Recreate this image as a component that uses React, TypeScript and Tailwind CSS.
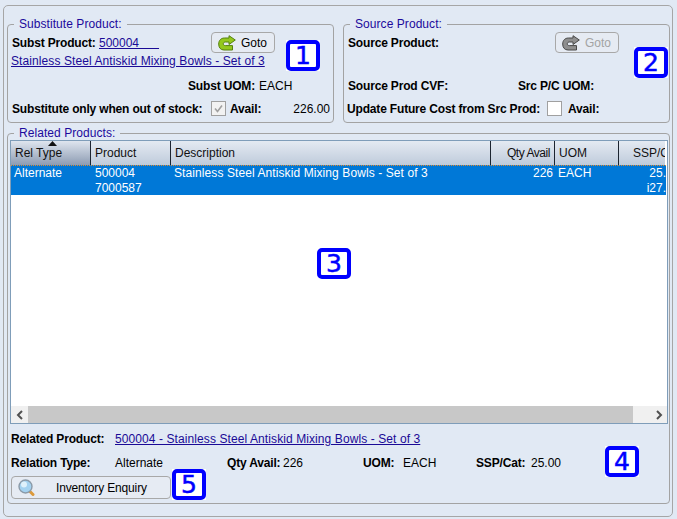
const font = "font-['Liberation_Sans',Arial,sans-serif]";

function Badge({ n, className }: { n: string; className: string }) {
  return (
    <div className={`absolute h-[31px] w-[34px] bg-white ${className}`}>
      <div className="flex h-full w-full items-center justify-center rounded-[5px] border-[4px] border-[#0000ff] bg-white font-['DejaVu_Sans',sans-serif] text-[25px] leading-none text-[#0000ff] [-webkit-text-stroke:0.5px_#0000ff]">
        {n}
      </div>
    </div>
  );
}

function GotoIcon({ disabled }: { disabled?: boolean }) {
  const fill = disabled ? "#8f8f8f" : "#94c81e";
  const stroke = disabled ? "#484848" : "#55800f";
  return (
    <svg width="18" height="16" viewBox="0 0 18 16" className="shrink-0">
      <path
        d="M11 0.7 L17.3 5 L11 9.5 L11 7 L7.5 7 C6 7 5.3 7.8 5.3 8.8 C5.3 9.9 6 10.6 7.5 10.6 L14.5 10.6 L14.5 15 L6 15 C2.6 15 0.7 12.6 0.7 9 C0.7 5.4 3 3 6.5 3 L11 3 Z"
        fill={fill}
        stroke={stroke}
        strokeWidth="1"
        strokeLinejoin="round"
      />
    </svg>
  );
}

function GotoButton({ disabled }: { disabled?: boolean }) {
  return (
    <button
      className={`flex h-[21px] w-[64px] items-center gap-[5px] rounded-[4px] border border-[#a8a8a8] bg-[#e6ebf3] pl-[6px] text-[12px] ${
        disabled ? "text-[#a3a3a3]" : "text-black"
      }`}
    >
      <GotoIcon disabled={disabled} />
      Goto
    </button>
  );
}

function Legend({ children }: { children: React.ReactNode }) {
  return (
    <span className="absolute left-[6px] top-[-8px] bg-[#e1e9f4] px-[5px] text-[12px] leading-[14px] tracking-[0.06px] text-[#1c0a9c]">
      {children}
    </span>
  );
}

function Panel({
  title,
  className,
  children,
}: {
  title: string;
  className: string;
  children: React.ReactNode;
}) {
  return (
    <div className={`relative rounded-[4px] border border-[#a3a3a3] ${className}`}>
      <Legend>{title}</Legend>
      {children}
    </div>
  );
}

const link = "text-[#1a0a96] underline tracking-[0.09px]";
const bold = "font-bold tracking-[-0.17px]";
const headCell =
  "flex h-full shrink-0 items-center border-r border-[#1c2430] px-[4px] text-[12px] text-[#111]";

export default function App() {
  return (
    <div className={`relative h-[519px] w-[677px] overflow-hidden bg-[#e1e9f4] pl-[3px] pt-[5px] text-[12px] leading-[14px] text-black ${font}`}>
      <div className="h-[512px] w-[670px] rounded-[5px] border border-[#a6a6a6] px-[3px] pt-[18px]">
        <div className="flex gap-[9px]">
          <Panel title="Substitute Product:" className="h-[99px] w-[327px] shrink-0">
            <div className="mt-[7px] flex h-[21px] items-center pl-[4px]">
              <span className={`w-[87px] ${bold}`}>Subst Product:</span>
              <span className="whitespace-pre text-[#1a0a96] underline">{"500004\u00a0\u00a0\u00a0\u00a0\u00a0\u00a0"}</span>
            </div>
            <div className="h-[17px] pl-[3px] pt-[1px]">
              <span className={link}>Stainless Steel Antiskid Mixing Bowls - Set of 3</span>
            </div>
            <div className="mt-[7px] flex h-[17px] items-center pl-[180px]">
              <span className={`w-[71px] ${bold}`}>Subst UOM:</span>
              <span>EACH</span>
            </div>
            <div className="mt-[6px] flex h-[17px] items-center pl-[4px]">
              <span className={`w-[199px] ${bold}`}>Substitute only when out of stock:</span>
              <span className="mr-[4px] flex h-[15px] w-[15px] items-center justify-center border border-[#a0a0a0] bg-[#f2f2f2]">
                <svg width="11" height="11" viewBox="0 0 11 11">
                  <path d="M2 5.5 L4.5 8.5 L9 2.5" fill="none" stroke="#a0a0a0" strokeWidth="1.6" />
                </svg>
              </span>
              <span className={`w-[48px] ${bold}`}>Avail:</span>
              <span className="w-[52px] text-right">226.00</span>
            </div>
            <div className="absolute left-[203px] top-[7px]">
              <GotoButton />
            </div>
          </Panel>
          <Panel title="Source Product:" className="h-[99px] w-[327px] shrink-0">
            <div className="mt-[7px] flex h-[21px] items-center pl-[4px]">
              <span className={bold}>Source Product:</span>
              <div className="ml-auto mr-[49px] translate-x-[-1px]">
                <GotoButton disabled />
              </div>
            </div>
            <div className="mt-[24px] flex h-[17px] items-center pl-[4px]">
              <span className={`w-[170px] ${bold}`}>Source Prod CVF:</span>
              <span className={bold}>Src P/C UOM:</span>
            </div>
            <div className="mt-[6px] flex h-[17px] items-center pl-[3px]">
              <span className={`w-[200px] ${bold}`}>Update Future Cost from Src Prod:</span>
              <span className="mr-[6px] h-[15px] w-[15px] border border-[#a0a0a0] bg-white" />
              <span className={bold}>Avail:</span>
            </div>
          </Panel>
        </div>

        <Panel title="Related Products:" className="mt-[10px] h-[371px] w-[663px]">
          <div className="ml-[2px] mt-[6px] h-[284px] w-[658px] border border-[#7f9db9] bg-white">
            <div className="relative flex h-[24px] w-[654px] overflow-hidden bg-gradient-to-b from-[#e4eaf2] to-[#bfcbdb]">
              <div className={`${headCell} w-[80px] bg-gradient-to-b from-[#dfe5ee] to-[#8d9cb3]`}>Rel Type</div>
              <div className={`${headCell} w-[80px]`}>Product</div>
              <div className={`${headCell} w-[320px]`}>Description</div>
              <div className={`${headCell} w-[64px] justify-end tracking-[-0.45px]`}>Qty Avail</div>
              <div className={`${headCell} w-[64px]`}>UOM</div>
              <div className="flex h-full flex-1 items-center justify-end overflow-hidden whitespace-nowrap text-[12px] text-[#111]">
                <span className="relative left-[14px]">SSP/Cat</span>
              </div>
              <svg className="absolute left-[37px] top-0" width="9" height="5" viewBox="0 0 9 5">
                <path d="M4.5 0 L9 5 L0 5 Z" fill="#111" />
              </svg>
            </div>
            <div className="flex h-[30px] w-[655px] overflow-hidden border-t border-dotted border-[#e08a30] bg-[#0078d7] leading-[15px] text-white">
              <div className="w-[80px] shrink-0 pl-[3px]">Alternate</div>
              <div className="w-[80px] shrink-0 pl-[4px]">500004<br />7000587</div>
              <div className="w-[320px] shrink-0 pl-[3px] tracking-[0.09px]">Stainless Steel Antiskid Mixing Bowls - Set of 3</div>
              <div className="w-[64px] shrink-0 pr-[2px] text-right">226</div>
              <div className="w-[64px] shrink-0 pl-[3px]">EACH</div>
              <div className="flex-1 overflow-hidden pl-[24px] text-right whitespace-nowrap">25.<br />i27.</div>
            </div>
            <div className="h-[211px]" />
            <div className="flex h-[17px] items-center">
              <div className="flex h-full w-[17px] items-center justify-center bg-[#f0f0f0]">
                <svg width="8" height="10" viewBox="0 0 8 10"><path d="M6 1 L2 5 L6 9" fill="none" stroke="#505050" strokeWidth="2" /></svg>
              </div>
              <div className="h-full w-[605px] bg-[#c8c8c8]" />
              <div className="h-full flex-1 bg-[#f0f0f0]" />
              <div className="flex h-full w-[17px] items-center justify-center bg-[#f0f0f0]">
                <svg width="8" height="10" viewBox="0 0 8 10"><path d="M2 1 L6 5 L2 9" fill="none" stroke="#505050" strokeWidth="2" /></svg>
              </div>
            </div>
          </div>
          <div className="mt-[7px] flex h-[16px] items-center pl-[3px]">
            <span className={`w-[104px] ${bold}`}>Related Product:</span>
            <span className={link}>500004 - Stainless Steel Antiskid Mixing Bowls - Set of 3</span>
          </div>
          <div className="mt-[8px] flex h-[16px] items-center pl-[3px]">
            <span className={`w-[104px] ${bold}`}>Relation Type:</span>
            <span className="w-[112px]">Alternate</span>
            <span className={`w-[56px] ${bold}`}>Qty Avail:</span>
            <span className="w-[80px]">226</span>
            <span className={`w-[40px] ${bold}`}>UOM:</span>
            <span className="w-[73px]">EACH</span>
            <span className={`w-[55px] ${bold}`}>SSP/Cat:</span>
            <span>25.00</span>
          </div>
          <button className="ml-[3px] mt-[5px] flex h-[23px] w-[160px] items-center rounded-[4px] border border-[#a8a8a8] bg-[#e6ebf3] pl-[6px]">
            <svg width="17" height="18" viewBox="0 0 17 18" className="shrink-0">
              <path d="M11.5 12 L15 15.5" stroke="#dc9a3c" strokeWidth="3" strokeLinecap="round" />
              <circle cx="7.5" cy="7.5" r="6.5" fill="#a4d2f0" stroke="#8b9aa8" strokeWidth="1.4" />
              <circle cx="6" cy="5.5" r="3" fill="#dff1fb" />
            </svg>
            <span className="ml-[21px] tracking-[-0.15px]">Inventory Enquiry</span>
          </button>
        </Panel>
      </div>
      <Badge n="1" className="left-[286px] top-[40px]" />
      <Badge n="2" className="left-[634px] top-[47px]" />
      <Badge n="3" className="left-[317px] top-[248px]" />
      <Badge n="4" className="left-[605px] top-[446px]" />
      <Badge n="5" className="left-[172px] top-[469px]" />
    </div>
  );
}
